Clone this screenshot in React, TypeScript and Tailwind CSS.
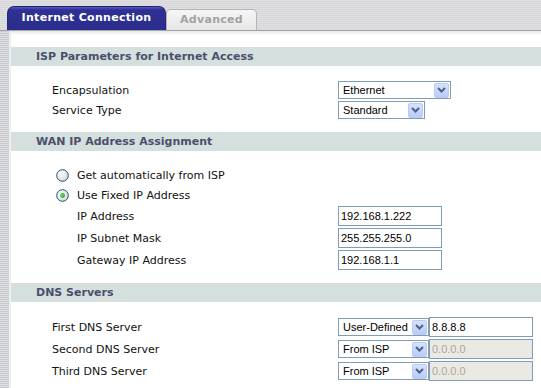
import React from "react";

const labelFont = "font-['DejaVu_Sans',Verdana,sans-serif] text-[11px] text-[#111]";
const fieldFont = "font-['Liberation_Sans',Arial,sans-serif] text-[11px]";

function Chevron() {
  return (
    <svg width="9" height="6" viewBox="0 0 9 6">
      <path d="M1 1 L4.5 4.5 L8 1" fill="none" stroke="#4d6185" strokeWidth="2" />
    </svg>
  );
}

function Select({ value, width }: { value: string; width: number }) {
  return (
    <div
      className="flex h-[18px] items-center border border-[#7f9db9] bg-white pl-[4px] pr-[1px]"
      style={{ width }}
    >
      <span className={`${fieldFont} flex-1 text-black`}>{value}</span>
      <div className="flex h-[15px] w-[15px] items-center justify-center rounded-[2px] border border-[#b9cbf3] bg-[linear-gradient(#d6e2fd,#b8ccf9)]">
        <Chevron />
      </div>
    </div>
  );
}

function TextBox({ value, width, disabled }: { value: string; width: number; disabled?: boolean }) {
  return (
    <div
      className={`flex h-[20px] items-center border border-[#7f9db9] pl-[2px] ${fieldFont} ${
        disabled ? "bg-[#ebe9e3] text-[#aca899]" : "bg-white text-black"
      }`}
      style={{ width }}
    >
      {value}
    </div>
  );
}

function Radio({ checked }: { checked?: boolean }) {
  return (
    <svg width="13" height="13" viewBox="0 0 13 13">
      <defs>
        <radialGradient id="rg" cx="0.35" cy="0.35" r="0.8">
          <stop offset="0" stopColor="#ffffff" />
          <stop offset="1" stopColor="#d4d3cc" />
        </radialGradient>
        <radialGradient id="dot" cx="0.4" cy="0.4" r="0.7">
          <stop offset="0" stopColor="#6fe06f" />
          <stop offset="1" stopColor="#1c9a1c" />
        </radialGradient>
      </defs>
      <circle cx="6.5" cy="6.5" r="5.8" fill="url(#rg)" stroke="#1c5180" strokeWidth="1" />
      {checked && <circle cx="6.5" cy="6.5" r="2.4" fill="url(#dot)" />}
    </svg>
  );
}

function SectionHeader({ title }: { title: string }) {
  return (
    <div className="flex h-[19px] items-center bg-[#d5dfdd] pl-[25px] pt-[1px]">
      <span className="font-['DejaVu_Sans',Verdana,sans-serif] text-[11px] font-bold text-[#4b4f6d]">{title}</span>
    </div>
  );
}

function Row({ label, indent, height = 20, children }: { label: string; indent?: boolean; height?: number; children?: React.ReactNode }) {
  return (
    <div className="flex items-center" style={{ height }}>
      <div className={`${labelFont} w-[327px] pt-[2px] ${indent ? "pl-[66px]" : "pl-[41px]"}`}>{label}</div>
      <div className="flex items-center">{children}</div>
    </div>
  );
}

export default function App() {
  return (
    <div className="flex h-[388px] w-[541px] flex-col overflow-hidden bg-white">
      {/* tab strip */}
      <div className="flex h-[31px] shrink-0 items-end border-b border-[#a4a4a6] bg-[repeating-linear-gradient(0deg,#d7d7d9_0px,#d7d7d9_1px,#dfdfe1_1px,#dfdfe1_2px)] pl-[7px]">
        <div className="flex h-[24px] w-[159px] items-center justify-center rounded-t-[7px] border border-b-0 border-[#25277a] bg-[linear-gradient(#5457b8_0px,#2e3093_3px,#2b2d8d)]">
          <span className="font-['DejaVu_Sans',Verdana,sans-serif] text-[11px] font-bold tracking-[0.3px] text-white">Internet Connection</span>
        </div>
        <div className="flex h-[21px] w-[91px] items-center justify-center rounded-t-[5px] border border-b-0 border-[#b4b4b4] bg-[linear-gradient(#f6f6f6,#e6e6e6)]">
          <span className="font-['DejaVu_Sans',Verdana,sans-serif] text-[11px] font-bold tracking-[0.3px] text-[#a2a2a2]">Advanced</span>
        </div>
      </div>

      <div className="flex flex-1">
        {/* left rail */}
        <div className="w-[11px] shrink-0 border-r-2 border-[#eeeef0] bg-[repeating-linear-gradient(0deg,#c9cbd1_0px,#c9cbd1_1px,#d9dbdf_1px,#dfe0e3_2px)]" />

        <div className="flex flex-1 flex-col bg-[linear-gradient(#e8e8e8_0px,#ffffff_4px)] pt-[16px]">
          <SectionHeader title="ISP Parameters for Internet Access" />
          <div className="pt-[14px]">
            <Row label="Encapsulation">
              <Select value="Ethernet" width={113} />
            </Row>
            <Row label="Service Type">
              <Select value="Standard" width={87} />
            </Row>
          </div>

          <div className="mt-[12px]">
            <SectionHeader title="WAN IP Address Assignment" />
          </div>
          <div className="pt-[14px]">
            <div className="flex h-[20px] items-center gap-[8px] pl-[45px]">
              <Radio />
              <span className={`${labelFont} pt-[2px]`}>Get automatically from ISP</span>
            </div>
            <div className="flex h-[20px] items-center gap-[8px] pl-[45px]">
              <Radio checked />
              <span className={`${labelFont} pt-[2px]`}>Use Fixed IP Address</span>
            </div>
            <Row label="IP Address" indent height={22}>
              <TextBox value="192.168.1.222" width={104} />
            </Row>
            <Row label="IP Subnet Mask" indent height={22}>
              <TextBox value="255.255.255.0" width={104} />
            </Row>
            <Row label="Gateway IP Address" indent height={22}>
              <TextBox value="192.168.1.1" width={104} />
            </Row>
          </div>

          <div className="mt-[12px]">
            <SectionHeader title="DNS Servers" />
          </div>
          <div className="pt-[14px]">
            <Row label="First DNS Server" height={22}>
              <Select value="User-Defined" width={91} />
              <TextBox value="8.8.8.8" width={104} />
            </Row>
            <Row label="Second DNS Server" height={22}>
              <Select value="From ISP" width={91} />
              <TextBox value="0.0.0.0" width={104} disabled />
            </Row>
            <Row label="Third DNS Server" height={22}>
              <Select value="From ISP" width={91} />
              <TextBox value="0.0.0.0" width={104} disabled />
            </Row>
          </div>
        </div>
      </div>
    </div>
  );
}
